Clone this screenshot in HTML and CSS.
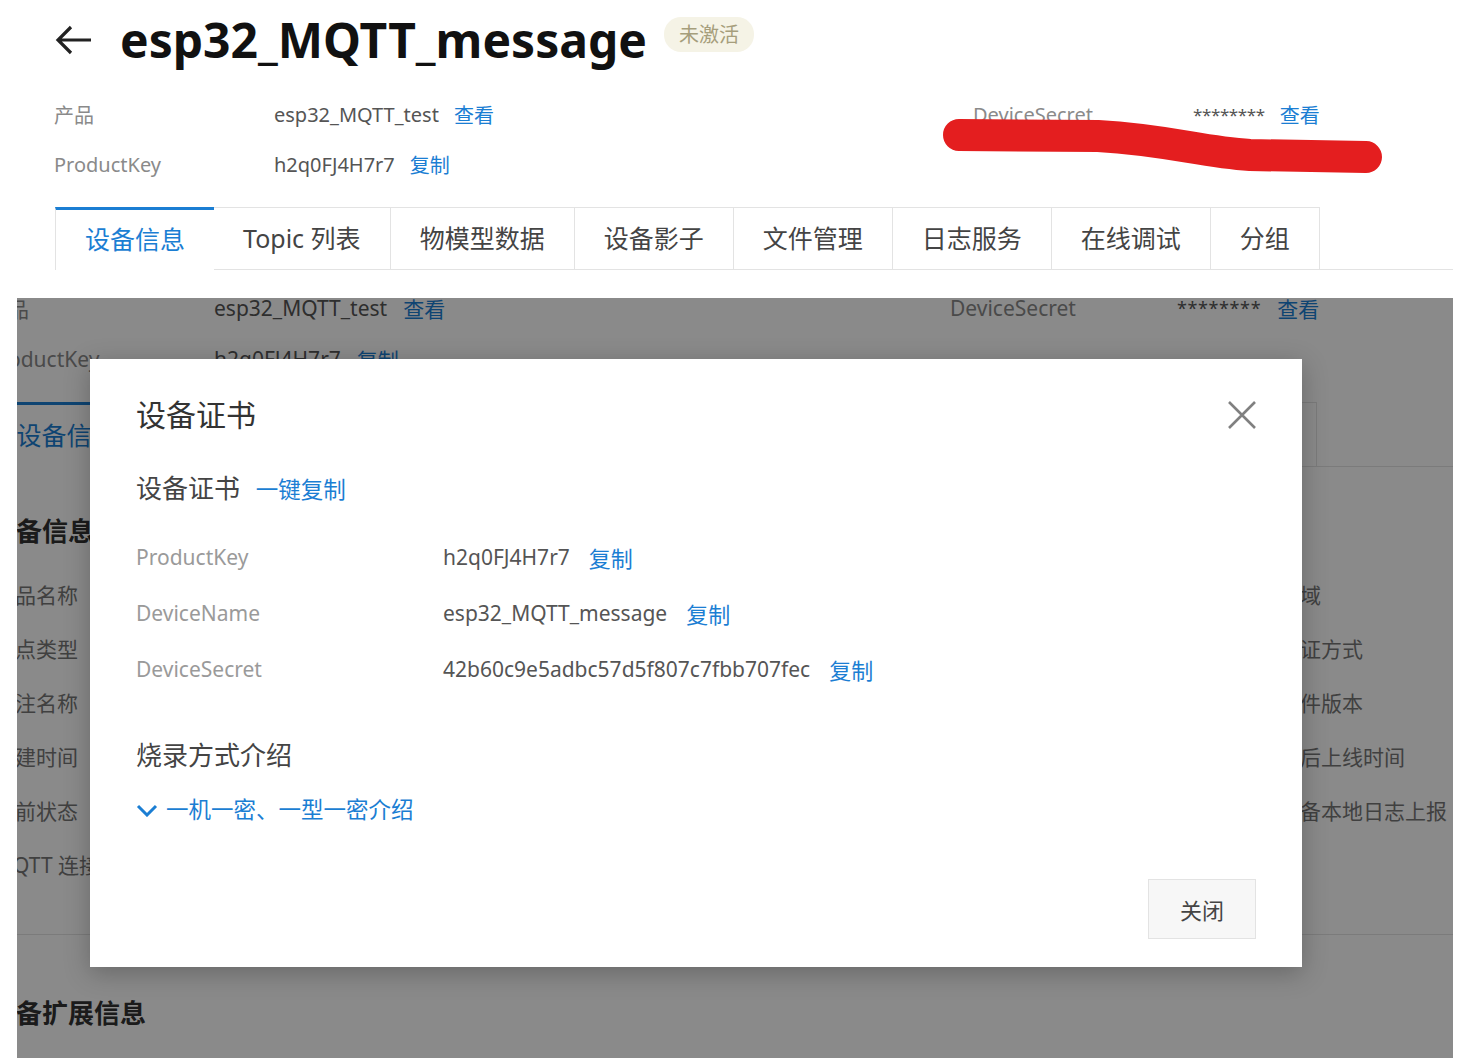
FILE: index.html
```html
<!DOCTYPE html>
<html>
  <head>
    <meta charset="utf-8" />
    <meta name="viewport" content="width=device-width, initial-scale=1" />
    <title>esp32_MQTT_message</title>
    <link rel="stylesheet" href="styles.css">
  </head>
  <body>
    <div class="page-top">
      <div class="title-row">
        <svg class="back" width="38" height="30" viewBox="0 0 38 30">
          <path d="M3 15 H36 M16 2 L3 15 L16 28" fill="none" stroke="#222" stroke-width="3.2" />
        </svg>
        <h1>esp32_MQTT_message</h1>
        <span class="badge">未激活</span>
      </div>
      <div class="meta">
        <div class="meta-col">
          <div class="meta-row"><span class="k">产品</span><span class="v">esp32_MQTT_test</span><a class="link">查看</a></div>
          <div class="meta-row"><span class="k">ProductKey</span><span class="v">h2q0FJ4H7r7</span><a class="link">复制</a></div>
        </div>
        <div class="meta-col">
          <div class="meta-row"><span class="k">DeviceSecret</span><span class="v stars">********</span><a class="link">查看</a></div>
        </div>
      </div>
      <!-- marker over the secret -->
      <svg class="scribble" width="440" height="56" viewBox="0 0 440 56">
        <path d="M16 17 L155 18 C227 22 257 34 307 37 L423 39" fill="none" stroke="#e41e1f" stroke-width="32" stroke-linecap="round" />
      </svg>
      <div class="tabs">
        <div class="tab active">设备信息</div>
        <div class="tab">Topic 列表</div>
        <div class="tab">物模型数据</div>
        <div class="tab">设备影子</div>
        <div class="tab">文件管理</div>
        <div class="tab">日志服务</div>
        <div class="tab">在线调试</div>
        <div class="tab">分组</div>
      </div>
    </div>

    <div class="shot">
      <div class="bg-page">
        <div class="bg-meta">
          <div class="bg-row"><span class="k">产品</span><span class="v">esp32_MQTT_test</span><a class="link">查看</a></div>
          <div class="bg-row"><span class="k">DeviceSecret</span><span class="v stars">********</span><a class="link">查看</a></div>
          <div class="bg-row"><span class="k">ProductKey</span><span class="v">h2q0FJ4H7r7</span><a class="link">复制</a></div>
          <div class="bg-row"></div>
        </div>
        <div class="tabs bg-tabs">
          <div class="tab active">设备信息</div>
          <div class="tab">Topic 列表</div>
          <div class="tab">物模型数据</div>
          <div class="tab">设备影子</div>
          <div class="tab">文件管理</div>
          <div class="tab">日志服务</div>
          <div class="tab">在线调试</div>
          <div class="tab">分组</div>
        </div>
        <h3 class="bg-heading">设备信息</h3>
        <div class="bg-details">
          <span>产品名称</span><span>地域</span>
          <span>节点类型</span><span>认证方式</span>
          <span>备注名称</span><span>固件版本</span>
          <span>创建时间</span><span>最后上线时间</span>
          <span>当前状态</span><span>设备本地日志上报</span>
          <span>MQTT 连接参数</span><span></span>
        </div>
        <hr class="bg-line" />
        <h3 class="bg-heading ext">设备扩展信息</h3>
      </div>

      <div class="mask"></div>

      <div class="modal">
        <div class="modal-head">
          <h2>设备证书</h2>
          <svg class="close" width="28" height="28" viewBox="0 0 28 28">
            <path d="M1 1 L27 27 M27 1 L1 27" stroke="#808080" stroke-width="2.6" />
          </svg>
        </div>
        <div class="cert-title">设备证书 <a class="link">一键复制</a></div>
        <div class="cert-list">
          <div class="cert-row"><span class="k">ProductKey</span><span class="v">h2q0FJ4H7r7</span><a class="link">复制</a></div>
          <div class="cert-row"><span class="k">DeviceName</span><span class="v">esp32_MQTT_message</span><a class="link">复制</a></div>
          <div class="cert-row"><span class="k">DeviceSecret</span><span class="v">42b60c9e5adbc57d5f807c7fbb707fec</span><a class="link">复制</a></div>
        </div>
        <h4 class="burn-title">烧录方式介绍</h4>
        <div class="collapse">
          <svg width="22" height="14" viewBox="0 0 22 14">
            <path d="M2 3 L11 12 L20 3" fill="none" stroke="#1b7ed3" stroke-width="3" />
          </svg>
          <a class="link">一机一密、一型一密介绍</a>
        </div>
        <div class="modal-foot">
          <button class="btn">关闭</button>
        </div>
      </div>
    </div>
  </body>
</html>
```

FILE: styles.css
```css
body {
  margin: 0;
  background: #fff;
  font-family: "Noto Sans", "Noto Sans CJK SC", sans-serif;
  color: #555;
}
.link {
  color: #1b7ed3;
  cursor: pointer;
}

/* header of the device page */
.page-top {
  position: relative;
}
.title-row {
  display: flex;
  align-items: center;
  height: 80px;
  padding-left: 55px;
}
.title-row h1 {
  margin: 0 0 0 27px;
  font-size: 48px;
  font-weight: 700;
  line-height: 1;
  color: #111;
}
.badge {
  margin: 0 0 11px 17px;
  padding: 0 15px;
  height: 35px;
  line-height: 35px;
  border-radius: 17px;
  background: #f5f3e6;
  color: #a69e7c;
  font-size: 20px;
}
.meta {
  display: grid;
  grid-template-columns: 919px auto;
  margin-top: 9px;
  padding-left: 54px;
}
.meta-row {
  display: flex;
  align-items: center;
  height: 50px;
  font-size: 20px;
}
.meta-row .k {
  width: 220px;
  color: #8a8a8a;
}
.meta-row .v {
  margin-right: 15px;
}
.stars {
  font-size: 17px;
  letter-spacing: -0.4px;
}
.scribble {
  position: absolute;
  left: 943px;
  top: 118px;
}

.tabs {
  display: flex;
  margin: 18px 14px 0 55px;
  border-bottom: 1px solid #e3e3e3;
  height: 62px;
}
.tab {
  padding: 0 29px;
  line-height: 60px;
  font-size: 25px;
  color: #444;
  border-top: 1px solid #e3e3e3;
  border-right: 1px solid #e3e3e3;
  white-space: nowrap;
}
.tab.active {
  color: #1b7ed3;
  border-top: 3px solid #1b7ed3;
  border-left: 1px solid #e3e3e3;
  border-right: none;
  height: 60px;
  background: #fff;
  line-height: 58px;
  margin-bottom: -1px;
}

/* second capture with the dialog */
.shot {
  position: relative;
  overflow: hidden;
  margin: 28px 0 0 17px;
  width: 1436px;
  height: 760px;
}
.bg-page {
  background: #fff;
  height: 100%;
}
.bg-meta {
  display: grid;
  grid-template-columns: 963px auto;
  margin: -16px 0 0 -30px;
}
.bg-row {
  display: flex;
  align-items: center;
  height: 51px;
  font-size: 21px;
}
.bg-row .k {
  width: 227px;
  color: #8a8a8a;
}
.bg-row .v {
  margin-right: 16px;
}
.bg-row .stars {
  font-size: 18px;
  letter-spacing: 0.6px;
}
.bg-tabs {
  margin: 18px 0 0 -35px;
  height: 64px;
}
.bg-tabs .tab {
  padding: 0 33.4px;
  line-height: 62px;
}
.bg-tabs .tab.active {
  height: 62px;
  line-height: 60px;
}
.bg-heading {
  margin: 46px 0 0 -27px;
  font-size: 26px;
  line-height: 36px;
  color: #333;
}
.bg-details {
  display: grid;
  grid-template-columns: 1285px auto;
  grid-auto-rows: 54px;
  margin: 19px 0 0 -23px;
  font-size: 21px;
  line-height: 54px;
  color: #777;
}
.bg-line {
  margin: 42px 0 0 0;
  border: none;
  border-top: 1px solid #e3e3e3;
}
.bg-heading.ext {
  margin-top: 60px;
}
.mask {
  position: absolute;
  inset: 0;
  background: rgba(0, 0, 0, 0.46);
}

.modal {
  position: absolute;
  left: 73px;
  top: 61px;
  width: 1212px;
  height: 608px;
  box-sizing: border-box;
  padding: 0 46px;
  background: #fff;
  box-shadow: 0 6px 24px rgba(0, 0, 0, 0.25);
}
.modal-head {
  display: flex;
  justify-content: space-between;
  align-items: center;
  padding-top: 36px;
  height: 40px;
}
.modal-head h2 {
  margin: 0;
  font-size: 30px;
  font-weight: 400;
  line-height: 40px;
  color: #333;
}
.cert-title {
  margin-top: 35px;
  line-height: 36px;
  font-size: 26px;
  color: #444;
}
.cert-title .link {
  margin-left: 9px;
  font-size: 22.5px;
}
.cert-list {
  margin-top: 21px;
}
.cert-row {
  display: flex;
  align-items: center;
  height: 56px;
  font-size: 21px;
}
.cert-row .k {
  width: 307px;
  color: #9a9a9a;
}
.cert-row .v {
  margin-right: 19px;
  color: #555;
}
.cert-row .link {
  font-size: 22px;
}
.burn-title {
  margin: 38px 0 0;
  font-size: 26px;
  font-weight: 400;
  line-height: 40px;
  color: #444;
}
.collapse {
  display: flex;
  align-items: center;
  gap: 8px;
  margin-top: 17px;
  line-height: 36px;
  font-size: 22.5px;
}
.modal-foot {
  display: flex;
  justify-content: flex-end;
  margin-top: 51px;
}
.btn {
  width: 108px;
  height: 60px;
  border: 1px solid #e3e3e3;
  background: #f7f7f7;
  font-family: inherit;
  font-size: 22px;
  color: #444;
}
```
